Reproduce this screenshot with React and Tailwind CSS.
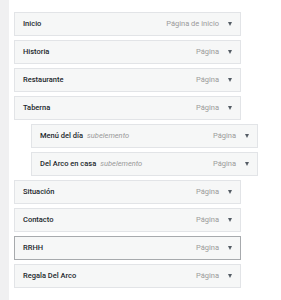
const items = [
  { title: "Inicio", type: "Página de inicio" },
  { title: "Historia", type: "Página" },
  { title: "Restaurante", type: "Página" },
  { title: "Taberna", type: "Página" },
  { title: "Menú del día", type: "Página", sub: true },
  { title: "Del Arco en casa", type: "Página", sub: true },
  { title: "Situación", type: "Página" },
  { title: "Contacto", type: "Página" },
  { title: "RRHH", type: "Página", active: true },
  { title: "Regala Del Arco", type: "Página" },
];

function MenuItem({ item }) {
  return (
    <div
      className={`flex items-center h-[24px] w-[227px] border bg-[#f6f7f7] pl-[8px] pr-[7px] ${
        item.sub ? "ml-[17px]" : ""
      } ${item.active ? "border-[#a7aaad]" : "border-[#e2e4e7]"}`}
    >
      <span className="text-[7.5px] font-medium text-[#23282d] whitespace-nowrap">
        {item.title}
      </span>
      {item.sub && (
        <span className="ml-[4px] text-[7.5px] italic text-[#9a9a9a] whitespace-nowrap">
          subelemento
        </span>
      )}
      <span className="ml-auto text-[7.5px] text-[#9a9a9a] whitespace-nowrap">
        {item.type}
      </span>
      <span className="ml-[9px] mr-[1px] w-0 h-0 border-l-[2.5px] border-r-[2.5px] border-t-[4px] border-l-transparent border-r-transparent border-t-[#555d66]" />
    </div>
  );
}

export default function App() {
  return (
    <div
      className="flex w-[281px] h-[300px] bg-white"
      style={{ fontFamily: "Roboto, 'Noto Sans', sans-serif" }}
    >
      <div className="w-[9px] shrink-0 bg-[#f0f0f1]" />
      <div className="flex flex-col gap-[4px] pl-[5px] pt-[12px]">
        {items.map((it) => (
          <MenuItem key={it.title} item={it} />
        ))}
      </div>
    </div>
  );
}
